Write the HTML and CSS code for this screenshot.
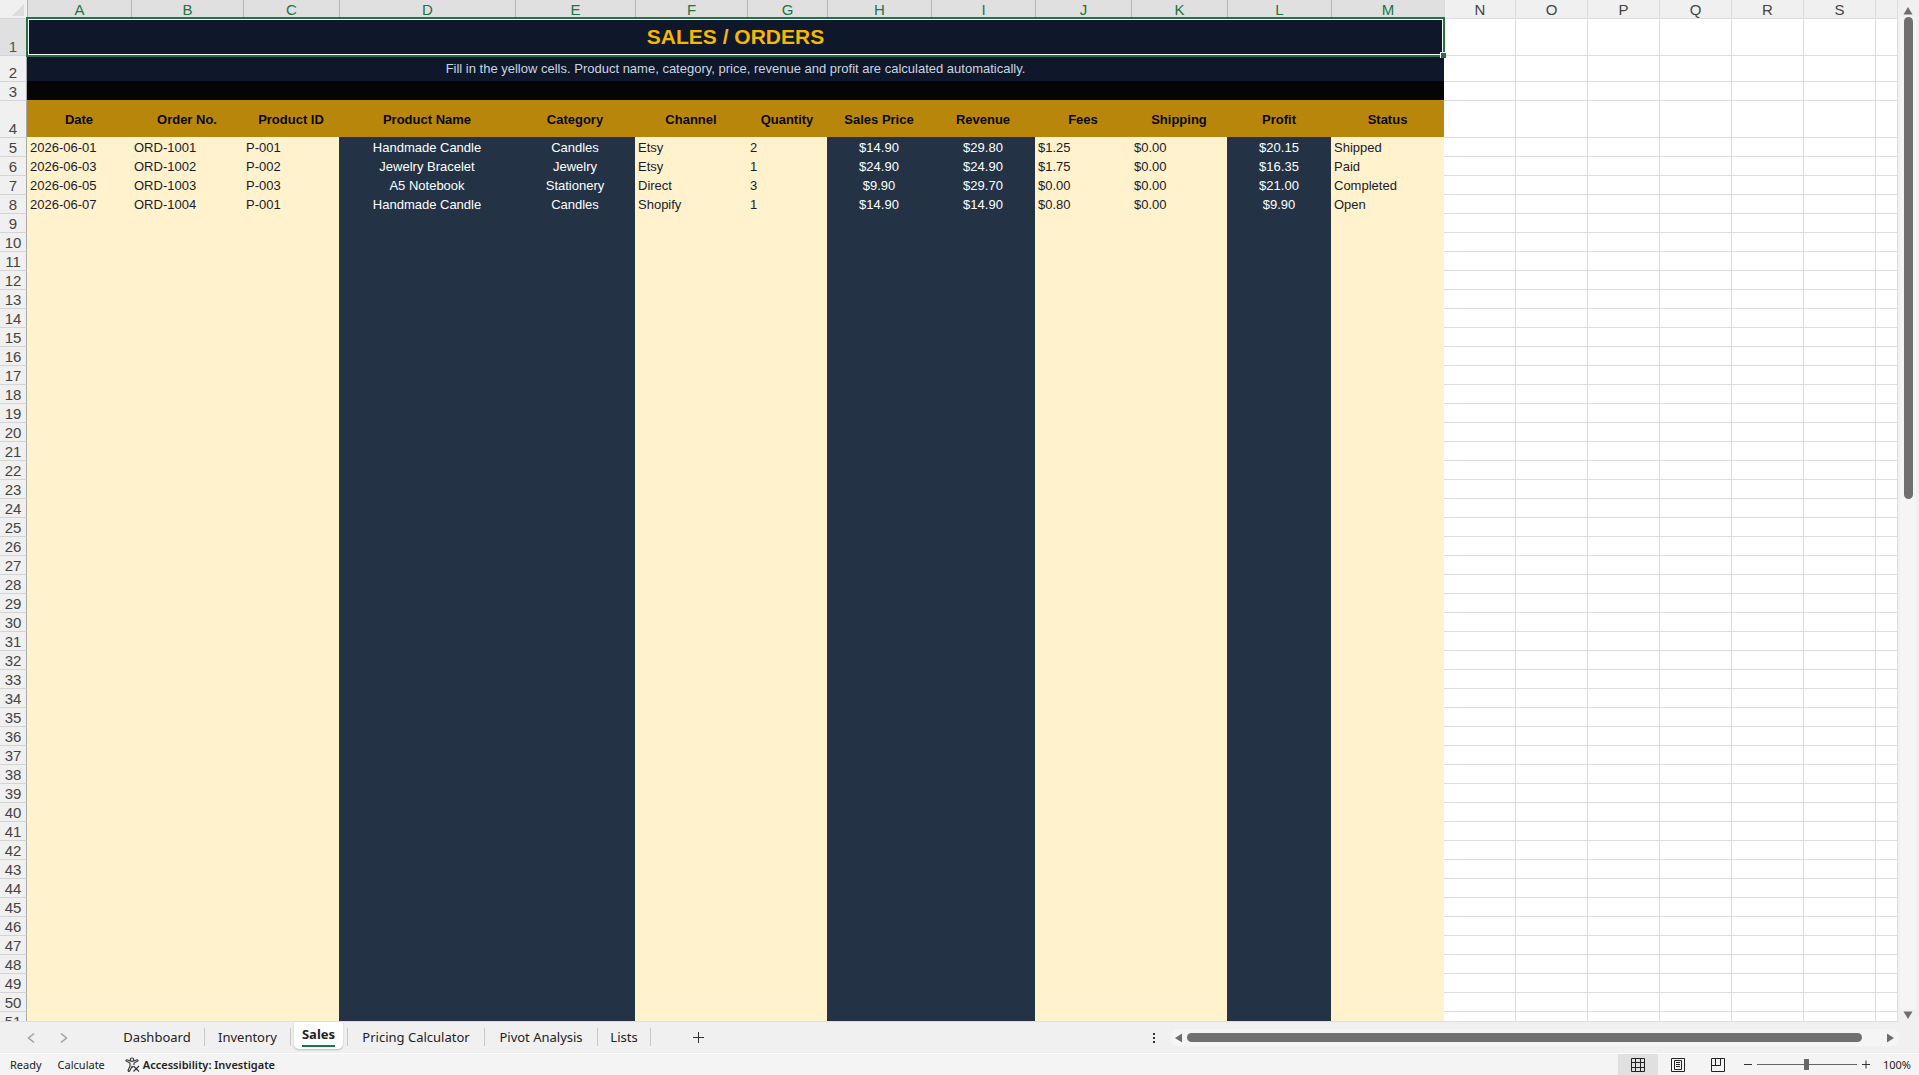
FILE: index.html
```html
<!DOCTYPE html>
<html lang="en">
<head>
<meta charset="utf-8">
<title>Sales / Orders</title>
<link rel="stylesheet" href="styles.css">
</head>
<body>
<main class="workspace">
  <div class="sheet">
    <table class="grid">
      <colgroup>
        <col class="w-head"><col class="w-104"><col class="w-112"><col class="w-96"><col class="w-176"><col class="w-120"><col class="w-112"><col class="w-80"><col class="w-104"><col class="w-104"><col class="w-96"><col class="w-96"><col class="w-104"><col class="w-113"><col class="w-71"><col class="w-72"><col class="w-72"><col class="w-72"><col class="w-72"><col class="w-72"><col>
      </colgroup>
      <thead>
        <tr class="letters">
          <th class="corner"><svg width="12" height="12" viewBox="0 0 12 12" aria-hidden="true"><path d="M12 0V12H0Z" fill="#dcdcdc"/></svg></th>
          <th class="on">A</th><th class="on">B</th><th class="on">C</th><th class="on">D</th><th class="on">E</th><th class="on">F</th><th class="on">G</th><th class="on">H</th><th class="on">I</th><th class="on">J</th><th class="on">K</th><th class="on">L</th><th class="on">M</th><th>N</th><th>O</th><th>P</th><th>Q</th><th>R</th><th>S</th><th></th>
        </tr>
      </thead>
      <tbody id="rows">
        <tr class="tall"><th class="num on">1</th><td class="title" colspan="13">SALES / ORDERS<span class="handle"></span></td><td></td><td></td><td></td><td></td><td></td><td></td><td></td></tr>
        <tr class="medium"><th class="num">2</th><td class="note" colspan="13">Fill in the yellow cells. Product name, category, price, revenue and profit are calculated automatically.</td><td></td><td></td><td></td><td></td><td></td><td></td><td></td></tr>
        <tr><th class="num">3</th><td class="spacer" colspan="13"></td><td></td><td></td><td></td><td></td><td></td><td></td><td></td></tr>
        <tr class="tall"><th class="num">4</th><th class="field">Date</th><th class="field">Order No.</th><th class="field">Product ID</th><th class="field">Product Name</th><th class="field">Category</th><th class="field">Channel</th><th class="field">Quantity</th><th class="field">Sales Price</th><th class="field">Revenue</th><th class="field">Fees</th><th class="field">Shipping</th><th class="field">Profit</th><th class="field">Status</th><td></td><td></td><td></td><td></td><td></td><td></td><td></td></tr>
      </tbody>
    </table>
  </div>
  <div class="vscroll">
    <svg width="12" height="8" viewBox="0 0 12 8" aria-hidden="true"><path d="M6 0 10.500 7.500H1.500Z" fill="#6e6e6e"/></svg>
    <div class="vtrack"><div class="vthumb"></div></div>
    <svg width="12" height="8" viewBox="0 0 12 8" aria-hidden="true"><path d="M6 8 10.500 .5H1.500Z" fill="#6e6e6e"/></svg>
  </div>
</main>
<nav class="tabs" aria-label="Sheets">
  <button class="nav" aria-label="Previous sheet"><svg width="8" height="12" viewBox="0 0 8 12"><path d="M7 1.500 1.500 6 7 10.500" fill="none" stroke="#a0a0a0" stroke-width="1.500"/></svg></button>
  <button class="nav" aria-label="Next sheet"><svg width="8" height="12" viewBox="0 0 8 12"><path d="M1 1.500 6.500 6 1 10.500" fill="none" stroke="#a0a0a0" stroke-width="1.500"/></svg></button>
  <div class="tablist">
    <button class="tab t-dash">Dashboard</button>
    <button class="tab t-inv">Inventory</button>
    <button class="tab active"><span>Sales</span></button>
    <button class="tab t-price">Pricing Calculator</button>
    <button class="tab t-pivot">Pivot Analysis</button>
    <button class="tab t-lists">Lists</button>
  </div>
  <button class="add" aria-label="New sheet"><svg width="11" height="11" viewBox="0 0 11 11"><path d="M5.500 0V11M0 5.500H11" stroke="#333" stroke-width="1"/></svg></button>
  <div class="dots"><svg width="2" height="10" viewBox="0 0 2 10" aria-hidden="true"><path d="M0 0h2v2H0zM0 4h2v2H0zM0 8h2v2H0z" fill="#333"/></svg></div>
  <div class="hscroll">
    <svg width="8" height="10" viewBox="0 0 8 10" aria-hidden="true"><path d="M0 5 7 .5V9.500Z" fill="#6e6e6e"/></svg>
    <div class="hthumb"></div>
    <svg width="8" height="10" viewBox="0 0 8 10" aria-hidden="true"><path d="M8 5 1 .5V9.500Z" fill="#6e6e6e"/></svg>
  </div>
</nav>
<footer class="status">
  <span class="ready">Ready</span>
  <span class="calc">Calculate</span>
  <button class="access"><svg width="16" height="16" viewBox="0 0 16 16" fill="none" stroke="#333" stroke-width="1.100"><circle cx="7" cy="2.700" r="1.700"/><path d="M5.200 4 2 2.700Q.8 2.700 1 4L5 6V9L3 13.500Q3.500 15 4.600 14L7 9.500 8 10.500M8.800 4 12 2.700Q13.200 2.700 13 4L9 6V8M8.500 9 14 14.500M14 9 8.500 14.500"/></svg>Accessibility: Investigate</button>
  <div class="views">
    <button class="view current" aria-label="Normal"><svg width="14" height="14" viewBox="0 0 14 14" fill="none" stroke="#222"><path d="M.5.500H13.500V13.500H.5ZM.5 4.500H13.500M.5 9.500H13.500M4.500 .5V13.500M9.500 .5V13.500"/></svg></button>
    <button class="view" aria-label="Page layout"><svg width="14" height="14" viewBox="0 0 14 14" fill="none" stroke="#222"><path d="M.5.500H13.500V13.500H.5ZM3.500 2.500H10.500V11.500H3.500ZM5 4.500H9M5 6.500H9M5 8.500H9"/></svg></button>
    <button class="view" aria-label="Page break preview"><svg width="14" height="14" viewBox="0 0 14 14" fill="none" stroke="#222"><path d="M.5.500H13.500V13.500H.5ZM4.500 .5V7.500M9.500 .5V7.500M.5 7.500H9.500"/></svg></button>
  </div>
  <button class="zoom" aria-label="Zoom out"><svg width="8" height="9" viewBox="0 0 8 9"><path d="M0 4.500H8" stroke="#333"/></svg></button>
  <input class="slider" type="range" min="0" max="200" value="100" aria-label="Zoom">
  <button class="zoom" aria-label="Zoom in"><svg width="8" height="9" viewBox="0 0 8 9"><path d="M0 4.500H8M4 .5V8.500" stroke="#333"/></svg></button>
  <span class="percent">100%</span>
</footer>
<script src="rows.js"></script>
</body>
</html>
```
FILE: rows.js
```js
const orders = [
  ["2026-06-01", "ORD-1001", "P-001", "Handmade Candle", "Candles", "Etsy", "2", "$14.90", "$29.80", "$1.25", "$0.00", "$20.15", "Shipped"],
  ["2026-06-03", "ORD-1002", "P-002", "Jewelry Bracelet", "Jewelry", "Etsy", "1", "$24.90", "$24.90", "$1.75", "$0.00", "$16.35", "Paid"],
  ["2026-06-05", "ORD-1003", "P-003", "A5 Notebook", "Stationery", "Direct", "3", "$9.90", "$29.70", "$0.00", "$0.00", "$21.00", "Completed"],
  ["2026-06-07", "ORD-1004", "P-001", "Handmade Candle", "Candles", "Shopify", "1", "$14.90", "$14.90", "$0.80", "$0.00", "$9.90", "Open"]
];
const calculated = new Set([3, 4, 7, 8, 11]);
const body = document.getElementById("rows");

for (let n = 5; n <= 51; n++) {
  const tr = document.createElement("tr");
  const th = document.createElement("th");
  th.className = "num";
  th.textContent = n;
  tr.append(th);
  for (let c = 0; c < 20; c++) {
    const td = document.createElement("td");
    if (c < 13) {
      td.className = calculated.has(c) ? "calculated" : "entry";
      td.textContent = orders[n - 5]?.[c] ?? "";
    }
    tr.append(td);
  }
  body.append(tr);
}
```
FILE: styles.css
```css
* { box-sizing: border-box; }
html, body { height: 100%; }
body {
  margin: 0;
  display: flex;
  flex-direction: column;
  overflow: hidden;
  background: #f0f0f0;
  color: #222;
  font-family: "Noto Sans", sans-serif;
}
button {
  border: 0;
  padding: 0;
  background: none;
  color: inherit;
  font: inherit;
  display: flex;
  align-items: center;
  justify-content: center;
}

/* Sheet */
.workspace { flex: 1; min-height: 0; display: flex; }
.sheet {
  flex: 1;
  min-width: 0;
  overflow: hidden;
  background: #fff;
  border-right: 1px solid #dedede;
  border-bottom: 1px solid #dedede;
}
.grid {
  width: 100%;
  table-layout: fixed;
  border-collapse: separate;
  border-spacing: 0;
  font: 13px/15px "Liberation Sans", Arial, sans-serif;
}
.w-head { width: 27px; }
.w-71 { width: 71px; }
.w-72 { width: 72px; }
.w-80 { width: 80px; }
.w-96 { width: 96px; }
.w-104 { width: 104px; }
.w-112 { width: 112px; }
.w-113 { width: 113px; }
.w-120 { width: 120px; }
.w-176 { width: 176px; }

.grid tr { height: 19px; }
.grid .medium { height: 26px; }
.grid .tall { height: 37px; }
.grid .letters { height: 18px; }
.grid th, .grid td { padding: 0; white-space: nowrap; overflow: hidden; }
.grid td {
  border-top: 1px solid #dedede;
  border-left: 1px solid #dedede;
}
.grid td:nth-last-child(7) { border-left-width: 0; }

.grid .letters th {
  padding-top: 2px;
  background: #f0f0f0;
  border-left: 1px solid #dcdcdc;
  color: #444;
  font-size: 15px;
  font-weight: 400;
  line-height: 16px;
}
.grid .letters .on { background: #e0e0e0; border-left-color: #b4b4b4; color: #217346; }
.grid .letters .corner { border-left: 0; padding-right: 3px; }
.letters svg { display: block; margin-left: auto; }

.grid .num {
  background: #f0f0f0;
  border-top: 1px solid #d4d4d4;
  border-right: 1px solid #a8a8a8;
  color: #444;
  font-size: 15px;
  font-weight: 400;
  line-height: 16px;
  vertical-align: bottom;
}
.grid .num.on { background: #e0e0e0; color: #217346; }

.grid .title {
  position: relative;
  overflow: visible;
  border: 0;
  background: #0f172a;
  color: #f5b800;
  font-size: 21px;
  font-weight: 700;
  line-height: 24px;
  text-align: center;
}
/* Selection frame round the merged cell */
.title::after {
  content: "";
  position: absolute;
  inset: -1px -1px -2px -1px;
  border: 2px solid #217346;
  box-shadow: inset 0 0 0 1px #fff;
}
.handle {
  position: absolute;
  z-index: 1;
  right: -2px;
  bottom: -3px;
  width: 6px;
  height: 6px;
  background: #217346;
  border: solid #fff;
  border-width: 1px 0 0 1px;
}
.grid .note { border: 0; background: #0f172a; color: #cbd5e1; text-align: center; }
.grid .spacer { border: 0; background: #050505; }
.grid .field { padding-top: 2px; background: #b8860b; color: #0a0a0a; font-weight: 700; }
.grid .entry, .grid .calculated { border: 0; padding-top: 2px; }
.grid .entry { background: #fff2cc; color: #1a1a2a; padding-left: 3px; }
.grid .calculated { background: #233345; color: #fff; text-align: center; }

.vscroll {
  width: 21px;
  padding: 7px 3px 3px 2px;
  display: flex;
  flex-direction: column;
  align-items: center;
  gap: 2px;
}
.vtrack { flex: 1; width: 16px; background: #f5f5f5; }
.vthumb { width: 9px; height: 482px; margin: 0 auto; border-radius: 5px; background: #707070; }

/* Sheet tabs */
.tabs {
  height: 31px;
  flex: none;
  display: flex;
  align-items: center;
  font-size: 13px;
}
.nav { width: 33px; height: 30px; }
.nav:first-child { margin-left: 14px; }
.tablist { display: flex; align-self: stretch; margin-left: 30px; }
.tab {
  height: 18px;
  margin-top: 6px;
  border-right: 1px solid #c8c8c8;
  white-space: nowrap;
}
.t-dash { width: 95px; }
.t-inv { width: 86px; }
.t-price { width: 138px; border-left: 1px solid #c8c8c8; }
.t-pivot { width: 113px; }
.t-lists { width: 53px; }
.active {
  width: 49px;
  height: 27px;
  margin: 0 4px 0 3px;
  border: 0;
  border-radius: 0 0 5px 5px;
  background: #fff;
  box-shadow: 0 1px 2px #bbb;
  font-weight: 700;
}
.active span { border-bottom: 2px solid #107c41; line-height: 21px; }
.add { width: 95px; height: 30px; }
.dots { margin-left: auto; width: 32px; display: flex; justify-content: center; }
.hscroll {
  width: 38%;
  height: 17px;
  margin-right: 20px;
  padding: 0 5px;
  display: flex;
  align-items: center;
  gap: 4px;
  border-radius: 9px;
  background: #f5f5f5;
}
.hthumb { flex: 1; height: 9px; margin-right: 20px; border-radius: 5px; background: #707070; }

/* Status bar */
.status {
  height: 22px;
  flex: none;
  display: flex;
  align-items: center;
  border-top: 1px solid #fff;
  background: #f4f4f4;
  font-size: 11px;
  padding: 0 8px 0 10px;
}
.calc { margin-left: 16px; }
.access { margin-left: 20px; gap: 2px; font-weight: 600; }
.views { display: flex; align-self: stretch; margin-left: auto; margin-right: 2px; }
.view { width: 40px; }
.current { background: #e0e0e0; }
.zoom { width: 16px; height: 20px; }
.slider {
  appearance: none;
  width: 100px;
  height: 11px;
  margin: 0 1px;
  background: linear-gradient(#666, #666) center / 100% 1px no-repeat;
}
.slider::-webkit-slider-thumb { appearance: none; width: 5px; height: 11px; background: #666; }
.percent { margin-left: 9px; }
```
